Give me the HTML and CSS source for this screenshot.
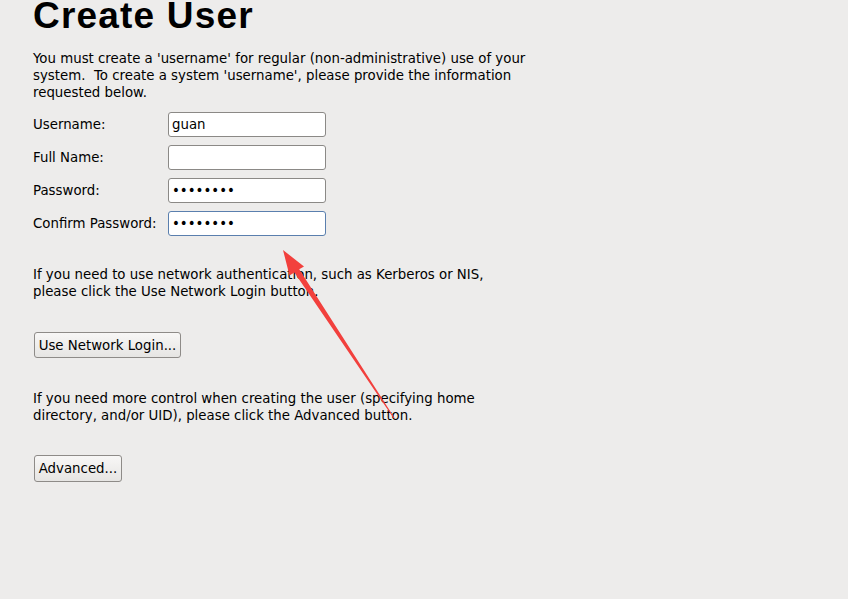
FILE: index.html
```html
<!DOCTYPE html>
<html>
<head>
<meta charset="utf-8">
<link rel="stylesheet" href="styles.css">
</head>
<body>
<div class="page">
  <h1 class="title">Create User</h1>
  <p class="para intro">You must create a 'username' for regular (non-administrative) use of your<br>system.&nbsp; To create a system 'username', please provide the information<br>requested below.</p>
  <div class="form">
    <label class="label">Username:</label>
    <input class="field" type="text" value="guan">
    <label class="label">Full Name:</label>
    <input class="field" type="text" value="">
    <label class="label">Password:</label>
    <input class="field" type="password" value="12345678">
    <label class="label">Confirm Password:</label>
    <input class="field focused" type="password" value="12345678">
  </div>
  <p class="para net">If you need to use network authentication, such as Kerberos or NIS,<br>please click the Use Network Login button.</p>
  <button class="btn btn-net">Use Network Login...</button>
  <p class="para adv">If you need more control when creating the user (specifying home<br>directory, and/or UID), please click the Advanced button.</p>
  <button class="btn btn-adv">Advanced...</button>
</div>
<svg class="arrow" width="848" height="599" viewBox="0 0 848 599">
  <polygon fill="#f2403d" points="283,250 304,266.5 299.2,269.3 394.4,417.7 393.6,418.3 294.4,272.5 289.5,275.5"/>
</svg>
</body>
</html>
```
FILE: styles.css
```css
html, body {
  margin: 0;
  padding: 0;
  background: #edeceb;
  width: 848px;
  height: 599px;
  overflow: hidden;
}
.page {
  padding-left: 33px;
  font-family: "DejaVu Sans", sans-serif;
  font-size: 13.33px;
  color: #000;
}
.title {
  font-family: "Liberation Sans", Arial, sans-serif;
  font-weight: bold;
  font-size: 37px;
  letter-spacing: 1.2px;
  line-height: 36px;
  margin: -2px 0 0 0;
  height: 36px;
  white-space: nowrap;
}
.para {
  margin: 0;
  line-height: 17px;
}
.intro { margin-top: 15.5px; }
.form {
  display: grid;
  grid-template-columns: 135px 158px;
  row-gap: 8px;
  margin-top: 11.5px;
  align-items: center;
}
.label {
  line-height: 25px;
}
.field {
  box-sizing: border-box;
  height: 25px;
  width: 158px;
  margin: 0;
  padding: 0 3px;
  border: 1px solid #8b8986;
  border-radius: 3px;
  background: #fff;
  font-family: "DejaVu Sans", sans-serif;
  font-size: 13.33px;
  color: #000;
  outline: none;
}
.focused {
  border-color: #5a7fae;
}
.net { margin-top: 29.5px; }
.adv { margin-top: 31.5px; }
.btn {
  display: block;
  box-sizing: border-box;
  height: 26px;
  margin: 0 0 0 1px;
  padding: 0 3px;
  border: 1px solid #8e8b88;
  border-radius: 3px;
  background: linear-gradient(#f8f7f6, #e6e5e3);
  font-family: "DejaVu Sans", sans-serif;
  font-size: 13.33px;
  color: #000;
  white-space: nowrap;
}
.btn-net { margin-top: 32.5px; width: 147px; }
.btn-adv { margin-top: 31.5px; width: 88px; height: 27px; }
.arrow {
  position: absolute;
  left: 0;
  top: 0;
  pointer-events: none;
}
```
